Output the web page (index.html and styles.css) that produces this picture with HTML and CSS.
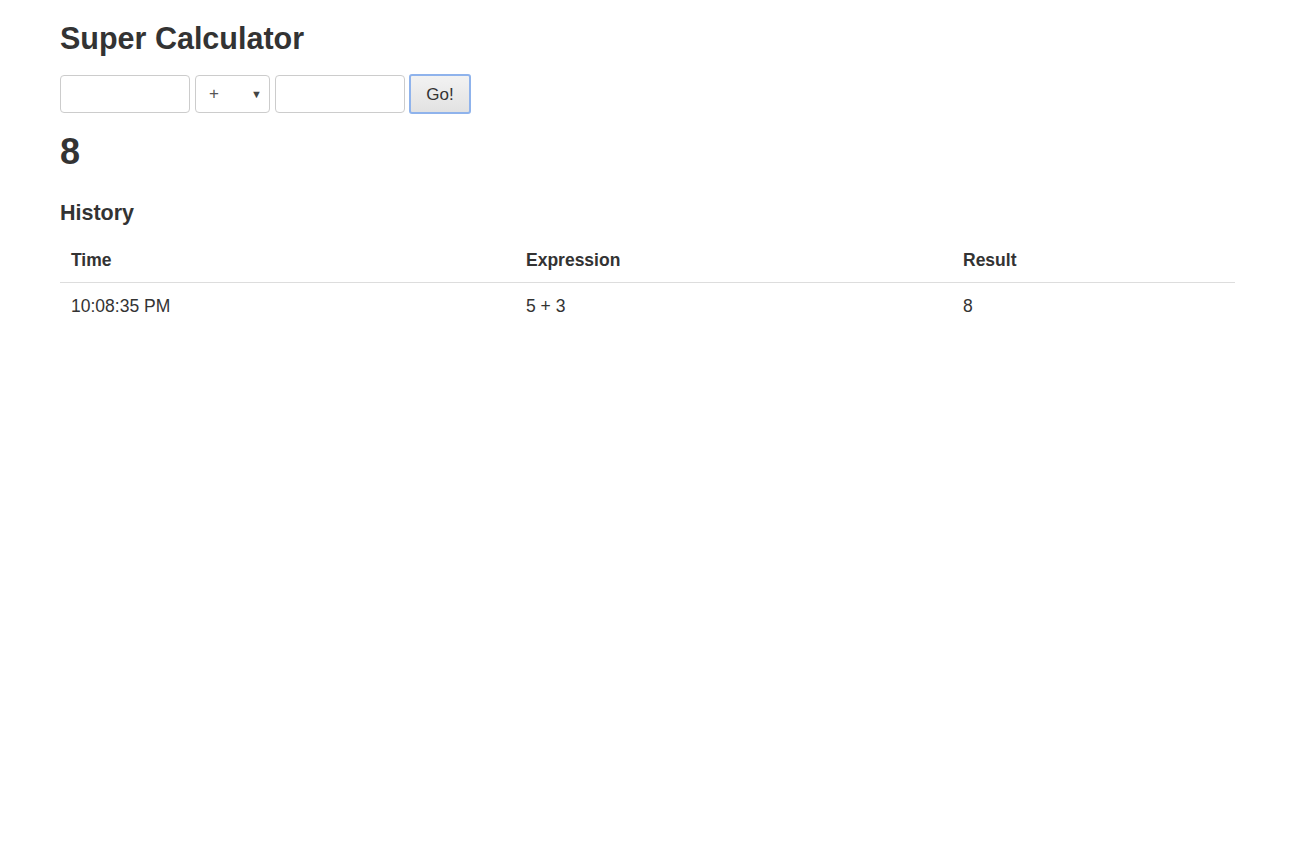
FILE: index.html
```html
<!DOCTYPE html>
<html>
<head>
<meta charset="utf-8">
<title>Super Calculator</title>
<link rel="stylesheet" href="styles.css">
</head>
<body>
<div class="page">
  <h1 class="title">Super Calculator</h1>
  <form class="calc">
    <input class="field" type="text">
    <div class="select"><span class="op">+</span><span class="arrow">&#9660;</span></div>
    <input class="field" type="text">
    <button class="go" type="button">Go!</button>
  </form>
  <div class="result">8</div>
  <h2 class="history">History</h2>
  <table class="table">
    <thead>
      <tr><th class="c1">Time</th><th class="c2">Expression</th><th class="c3">Result</th></tr>
    </thead>
    <tbody>
      <tr><td class="c1">10:08:35 PM</td><td>5 + 3</td><td>8</td></tr>
    </tbody>
  </table>
</div>
</body>
</html>
```

FILE: styles.css
```css
html, body {
  margin: 0;
  padding: 0;
  background: #fff;
}
body {
  font-family: "Liberation Sans", Arial, Helvetica, sans-serif;
  color: #333;
}
.page {
  padding: 21px 60px 0 60px;
}
.title {
  font-size: 30.5px;
  line-height: 34px;
  font-weight: bold;
  margin: 0;
}
.calc {
  display: flex;
  align-items: center;
  gap: 5px;
  margin-top: 19px;
  height: 40px;
}
.field {
  box-sizing: border-box;
  width: 130px;
  height: 38px;
  border: 1px solid #ccc;
  border-radius: 4px;
  padding: 6px 12px;
  font-size: 17px;
  font-family: inherit;
  margin: 0;
}
.select {
  box-sizing: border-box;
  width: 75px;
  height: 38px;
  border: 1px solid #ccc;
  border-radius: 4px;
  display: flex;
  align-items: center;
  justify-content: space-between;
  padding: 0 7px 0 13px;
  color: #555;
}
.op {
  font-size: 17px;
}
.arrow {
  font-size: 11px;
  color: #444;
}
.go {
  box-sizing: border-box;
  width: 62px;
  height: 40px;
  margin-left: -1px;
  border: 2px solid #8fb3ec;
  border-radius: 3px;
  background: linear-gradient(#f2f2f2, #e2e2e2);
  color: #333;
  font-size: 17px;
  font-family: inherit;
  padding: 2px 0 0 0;
}
.result {
  font-size: 36px;
  line-height: 40px;
  font-weight: bold;
  margin-top: 18px;
}
.history {
  font-size: 21.5px;
  line-height: 24px;
  font-weight: bold;
  margin: 29px 0 0 0;
}
.table {
  width: 100%;
  table-layout: fixed;
  border-collapse: collapse;
  margin-top: 13px;
  font-size: 17.5px;
  line-height: 24px;
}
.table th, .table td {
  box-sizing: border-box;
  text-align: left;
  padding: 10px;
}
.table th {
  font-weight: bold;
  border-bottom: 1px solid #ddd;
}
.table td {
  padding-top: 11px;
}
.table .c1 { width: 456px; padding-left: 11px; }
.table .c2 { width: 437px; }
```
